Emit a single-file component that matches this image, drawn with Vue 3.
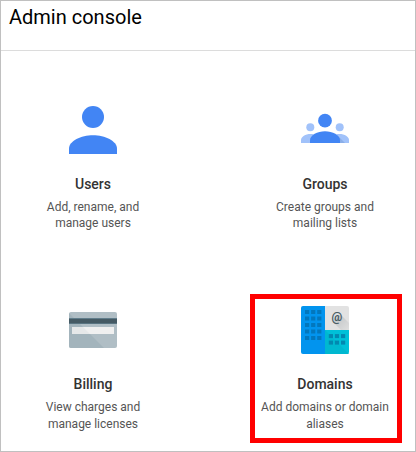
<script setup>
const tiles = [
  { id: 'users', title: 'Users', lines: ['Add, rename, and', 'manage users'] },
  { id: 'groups', title: 'Groups', lines: ['Create groups and', 'mailing lists'] },
  { id: 'billing', title: 'Billing', lines: ['View charges and', 'manage licenses'] },
  { id: 'domains', title: 'Domains', lines: ['Add domains or domain', 'aliases'], active: true },
]
const leftWindows = [0, 1, 2, 3, 4].flatMap((r) => [0, 1, 2].map((c) => ({ x: 4 + c * 6.1, y: 4 + r * 6.5 })))
const rightWindows = [0, 1].flatMap((r) => [0, 1, 2].map((c) => ({ x: 27.8 + c * 6.1, y: 28.1 + r * 6.5 })))
</script>

<template>
  <div class="console">
    <header class="header">Admin console</header>
    <main class="grid">
      <section v-for="t in tiles" :key="t.id" class="tile" :class="{ lower: t.id === 'billing' || t.id === 'domains' }">
        <svg class="icon" viewBox="0 0 48 48">
          <defs v-if="t.id === 'billing' || t.id === 'domains'">
            <linearGradient :id="'shade-' + t.id" x1="0" y1="0" x2="1" y2="1">
              <stop offset="0" stop-color="#37474f" stop-opacity="0.22" />
              <stop offset="1" stop-color="#37474f" stop-opacity="0.02" />
            </linearGradient>
          </defs>
          <g v-if="t.id === 'users'" fill="#4285f4">
            <circle cx="24" cy="11" r="11" />
            <path d="M0 48v-5.500C0 35 12 29.200 24 29.200S48 35 48 42.500V48z" />
          </g>
          <g v-else-if="t.id === 'groups'">
            <g fill="#a1c2fa">
              <circle cx="9.300" cy="21.200" r="4" />
              <circle cx="38.700" cy="21.200" r="4" />
              <path d="M0 37v-3c0-3.300 4.500-6 9.500-6s9.500 2.700 9.500 6v3zM29 37v-3c0-3.300 4.500-6 9.500-6s9.500 2.700 9.500 6v3z" />
            </g>
            <path d="M36.500 29.500L44 37h-6z" fill="#8aaee8" />
            <circle cx="24" cy="14.700" r="6.900" fill="#4285f4" />
            <path d="M9 37v-2.800c0-5 7.500-8.900 15-8.900s15 3.900 15 8.900V37z" fill="#4285f4" />
          </g>
          <g v-else-if="t.id === 'billing'">
            <rect y="6" width="48" height="36" rx="2" fill="#b0bec5" />
            <path d="M0 7l35 35H2a2 2 0 0 1-2-2z" fill="#a3b4bc" />
            <path d="M0 12h48v6H0z" fill="#455a64" />
            <path d="M0 12h48v1H0zM0 17.300h48v.7H0z" fill="#607d8b" />
            <path d="M3 21h42v7H3z" fill="#f0f0f0" />
            <path d="M3 21h11l7 7H3z" fill="#e6e8e9" />
          </g>
          <g v-else>
            <path d="M2 0h22v48H2a2 2 0 0 1-2-2V2a2 2 0 0 1 2-2z" fill="#0294ee" />
            <path d="M24 0h22a2 2 0 0 1 2 2v22H24z" fill="#e2e2e2" />
            <path d="M39.500 8.500L48 17v7H40l-8-8z" fill="url(#shade-domains)" />
            <path d="M24 24h24v22a2 2 0 0 1-2 2H24z" fill="#00c0d8" />
            <path d="M24 24v0l24 24H24z" fill="#00b8d0" />
            <rect v-for="(w, i) in leftWindows" :key="'l' + i" :x="w.x" :y="w.y" width="4.200" height="4" fill="#0277bd" />
            <rect v-for="(w, i) in rightWindows" :key="'r' + i" :x="w.x" :y="w.y" width="4.200" height="4" fill="#0288b0" />
            <text class="at" x="35.800" y="15.300" text-anchor="middle">@</text>
          </g>
        </svg>
        <h2 class="title">{{ t.title }}</h2>
        <p class="desc">
          <span v-for="line in t.lines" :key="line">{{ line }}</span>
        </p>
        <div v-if="t.active" class="highlight"></div>
      </section>
    </main>
  </div>
</template>

<style>
body {
  background: #fff;
}
</style>

<style scoped>
.console {
  box-sizing: border-box;
  width: 416px;
  height: 452px;
  border: 1px solid #c0c0c0;
  overflow: hidden;
  font-family: Roboto, "Liberation Sans", sans-serif;
}
.header {
  box-sizing: border-box;
  height: 50px;
  padding: 4px 8px 0;
  border-bottom: 1px solid #dcdcdc;
  font-size: 20px;
  line-height: 24px;
  color: #000;
}
.grid {
  display: grid;
  grid-template-columns: 152px 152px;
  grid-template-rows: 200px 200px;
  column-gap: 80px;
  padding: 43px 0 0 16px;
}
.tile {
  position: relative;
  display: flex;
  flex-direction: column;
  align-items: center;
  padding-top: 12px;
}
.icon {
  width: 48px;
  height: 48px;
}
.title {
  margin: 22px 0 0;
  font-size: 14px;
  font-weight: 500;
  line-height: 16px;
  color: #333;
}
.desc {
  display: flex;
  flex-direction: column;
  margin: 7px 0 0;
  font-size: 12px;
  line-height: 16px;
  text-align: center;
  white-space: nowrap;
  color: #555;
}
.lower .desc {
  line-height: 17px;
}
.highlight {
  position: absolute;
  box-sizing: border-box;
  top: 0;
  left: 1px;
  width: 152px;
  height: 149px;
  border: 5px solid #f00;
}
.at {
  font-size: 12px;
  font-weight: 700;
  fill: #455a64;
}
</style>
